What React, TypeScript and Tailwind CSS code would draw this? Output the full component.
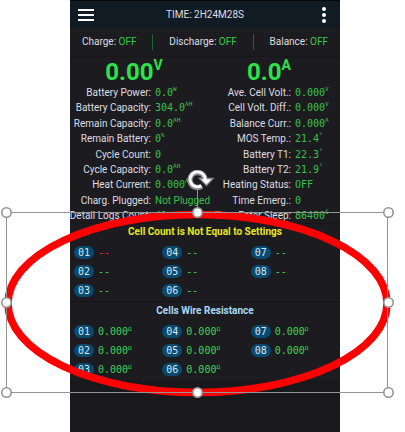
interface Reading {
  label: string;
  value: string;
  unit?: string;
  plain?: boolean;
}

interface Cell {
  id: string;
  value: string;
  unit?: string;
  alert?: boolean;
}

const SWITCHES = ['Charge', 'Discharge', 'Balance'];

const LEFT: Reading[] = [
  { label: 'Battery Power:', value: '0.0', unit: 'W' },
  { label: 'Battery Capacity:', value: '304.0', unit: 'AH' },
  { label: 'Remain Capacity:', value: '0.0', unit: 'AH' },
  { label: 'Remain Battery:', value: '0', unit: '%' },
  { label: 'Cycle Count:', value: '0' },
  { label: 'Cycle Capacity:', value: '0.0', unit: 'AH' },
  { label: 'Heat Current:', value: '0.000', unit: 'A' },
  { label: 'Charg. Plugged:', value: 'Not Plugged', plain: true },
  { label: 'Detail Logs Count:', value: '41' },
];

const RIGHT: Reading[] = [
  { label: 'Ave. Cell Volt.:', value: '0.000', unit: 'V' },
  { label: 'Cell Volt. Diff.:', value: '0.000', unit: 'V' },
  { label: 'Balance Curr.:', value: '0.000', unit: 'A' },
  { label: 'MOS Temp.:', value: '21.4', unit: '°' },
  { label: 'Battery T1:', value: '22.3', unit: '°' },
  { label: 'Battery T2:', value: '21.9', unit: '°' },
  { label: 'Heating Status:', value: 'OFF' },
  { label: 'Time Emerg.:', value: '0' },
  { label: 'Time Enter Sleep:', value: '86400', unit: 'S' },
];

const IDS = ['01', '02', '03', '04', '05', '06', '07', '08'];

const VOLTAGES: Cell[] = IDS.map((id) => ({ id, value: '--', alert: id === '01' }));
const RESISTANCES: Cell[] = IDS.map((id) => ({ id, value: '0.000', unit: 'Ω' }));

const HANDLES = [
  [6, 42],
  [197, 42],
  [388, 42],
  [6, 132],
  [388, 132],
  [6, 222],
  [197, 222],
  [388, 222],
];

const Unit = ({ children }: { children: string }) => (
  <span className="self-start text-[6px] leading-[7px]">{children}</span>
);

const Total = ({ value, unit }: { value: string; unit: string }) => (
  <p className="flex items-start justify-center pr-3 text-[24px] leading-[26px] font-bold text-[#2be34a]">
    {value}
    <span className="text-[14px] leading-3">{unit}</span>
  </p>
);

const Readings = ({ items }: { items: Reading[] }) => (
  <dl className="grid h-[138px] content-between">
    {items.map((item) => (
      <div key={item.label} className="flex h-[15px] items-center gap-1 leading-[15px] whitespace-nowrap">
        <dt className="flex w-[81px] shrink-0 justify-end">{item.label}</dt>
        <dd
          className={
            item.plain
              ? 'text-[#35c24a]'
              : "flex font-['DejaVu_Sans_Mono',monospace] text-[10px] text-[#35c24a]"
          }
        >
          {item.value}
          {item.unit && <Unit>{item.unit}</Unit>}
        </dd>
      </div>
    ))}
  </dl>
);

const CellGrid = ({ cells }: { cells: Cell[] }) => (
  <ul className="grid grid-flow-col grid-cols-3 grid-rows-3 gap-y-[6px] pr-px pl-1 font-['DejaVu_Sans_Mono',monospace] text-[10px] leading-[13px]">
    {cells.map((cell) => (
      <li key={cell.id} className="flex h-[13px] items-center gap-1">
        <span className="w-5 rounded-full bg-[#084a70] text-center text-[#d5e6ee]">{cell.id}</span>
        <span className={cell.alert ? 'flex text-[#f01c1c]' : 'flex text-[#3ad650]'}>
          {cell.value}
          {cell.unit && <Unit>{cell.unit}</Unit>}
        </span>
      </li>
    ))}
  </ul>
);

/** Red ellipse with its selection frame, resize handles and rotation handle. */
const Selection = () => (
  <svg
    className="pointer-events-none absolute top-[170px] left-0 h-[240px] w-[405px]"
    viewBox="0 0 405 240"
    fill="none"
    aria-hidden="true"
  >
    <ellipse cx="197.5" cy="133.5" rx="189.5" ry="89" stroke="#ff0000" strokeWidth="7.6" />
    <rect x="6.5" y="42.5" width="381" height="180" stroke="#949494" />
    <path d="M197.5 20v22" stroke="#949494" />
    {HANDLES.map(([x, y]) => (
      <circle key={`${x}-${y}`} cx={x + 0.5} cy={y + 0.5} r="4.7" fill="#fff" stroke="#949494" strokeWidth="1.6" />
    ))}
    <path d="M205 10a7.5 7.5 0 1 0-3.2 6.1" stroke="#8a8a8a" strokeWidth="5.5" />
    <path d="M199.5 8.5h13.5l-6.5 7z" fill="#fff" stroke="#8a8a8a" strokeWidth="1.3" />
    <path d="M205 10.5a7.5 7.5 0 1 0-3.5 5.2" stroke="#fff" strokeWidth="2.8" />
  </svg>
);

export default function App() {
  return (
    <div className="relative min-h-screen bg-white pr-[65px] pl-[70px] font-['Roboto',sans-serif] text-[10px] text-[#dedee0]">
      <main className="flex min-h-screen flex-col bg-[#19181d]">
        <header className="flex h-7 items-center justify-between border-t border-[#08090b] bg-[#101b23] px-2">
          <button type="button" aria-label="Menu" className="grid w-4 gap-[3px]">
            <span className="h-[2px] bg-white" />
            <span className="h-[2px] bg-white" />
            <span className="h-[2px] bg-white" />
          </button>
          <h1>TIME: 2H24M28S</h1>
          <button type="button" aria-label="More" className="grid w-4 justify-center gap-[2px]">
            <span className="size-1 rounded-full bg-white" />
            <span className="size-1 rounded-full bg-white" />
            <span className="size-1 rounded-full bg-white" />
          </button>
        </header>

        <section className="flex items-center justify-between border-b border-[#17161a] bg-[#1c1b20] px-3 py-[6px] leading-4">
          {SWITCHES.map((name, i) => (
            <div key={name} className="contents">
              {i > 0 && <span className="h-4 w-px bg-[#1c6a2b]" />}
              <p>
                {name}: <span className="text-[#2fd047]">OFF</span>
              </p>
            </div>
          ))}
        </section>

        <section className="grid grid-cols-[140px_1fr] bg-[#1c1b20] pt-[2px]">
          <Total value="0.00" unit="V" />
          <Total value="0.0" unit="A" />
          <Readings items={LEFT} />
          <Readings items={RIGHT} />
        </section>

        <section className="border-t border-[#17161a] bg-[#1c1b20] pb-1">
          <h2 className="pb-[6px] text-center leading-4 font-bold text-[#e6e620]">
            Cell Count is Not Equal to Settings
          </h2>
          <CellGrid cells={VOLTAGES} />
        </section>

        <section className="border-t-2 border-[#17161a] bg-[#1c1b20] pb-1">
          <h2 className="pb-[6px] text-center leading-4 font-bold text-[#a9dcf5]">
            Cells Wire Resistance
          </h2>
          <CellGrid cells={RESISTANCES} />
        </section>
      </main>
      <Selection />
    </div>
  );
}
